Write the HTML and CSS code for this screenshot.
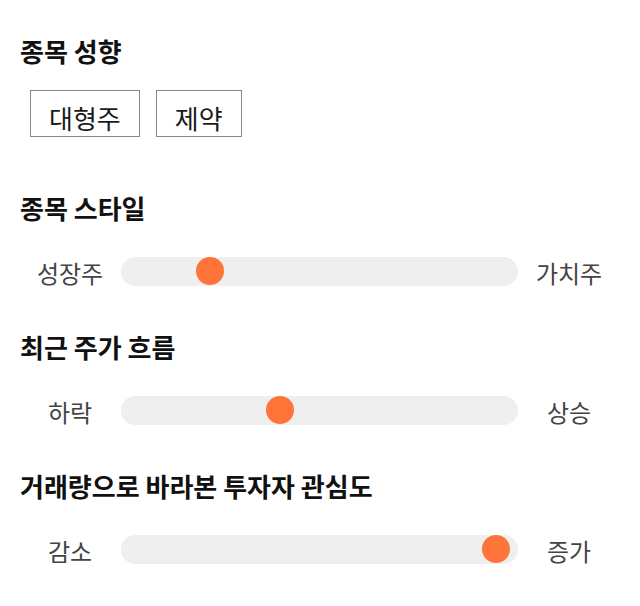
FILE: index.html
```html
<!DOCTYPE html>
<html>
<head>
    <title>종목 분석</title>
    <meta charset="UTF-8">
    <link rel="stylesheet" href="styles.css">
</head>
<body>
    <div class="panel">
        <h2 class="title first">종목 성향</h2>
        <div class="tags">
            <span class="tag">대형주</span>
            <span class="tag">제약</span>
        </div>

        <h2 class="title">종목 스타일</h2>
        <div class="slider-row">
            <span class="side">성장주</span>
            <div class="track"><span class="thumb" style="--pos: 0.203"></span></div>
            <span class="side">가치주</span>
        </div>

        <h2 class="title">최근 주가 흐름</h2>
        <div class="slider-row">
            <span class="side">하락</span>
            <div class="track"><span class="thumb" style="--pos: 0.393"></span></div>
            <span class="side">상승</span>
        </div>

        <h2 class="title">거래량으로 바라본 투자자 관심도</h2>
        <div class="slider-row">
            <span class="side">감소</span>
            <div class="track"><span class="thumb" style="--pos: 0.978"></span></div>
            <span class="side">증가</span>
        </div>
    </div>
</body>
</html>
```
FILE: styles.css
```css
body {
    margin: 0;
    padding: 0 20px;
    font-family: "Noto Sans CJK KR", "Noto Sans", sans-serif;
    background: #fff;
}

.panel {
    width: 600px;
}

.title {
    margin: 41px 0 0 0;
    font-size: 26px;
    line-height: 30px;
    font-weight: bold;
    color: #111;
}

.title.first {
    margin-top: 36px;
}

.tags {
    display: flex;
    gap: 16px;
    margin: 24px 0 0 10px;
}

.tag {
    border: 1px solid #888;
    height: 37px;
    padding: 8px 18px 0;
    font-size: 26px;
    line-height: 37px;
    color: #1a1a1a;
}

.tags + .title {
    margin-top: 56px;
}

.slider-row {
    display: flex;
    align-items: center;
    height: 40px;
    margin-top: 28px;
}

.side {
    width: 100px;
    text-align: center;
    font-size: 24px;
    color: #444;
    padding-top: 3px;
}

.track {
    position: relative;
    width: 397px;
    height: 29px;
    margin: 0 1px;
    border-radius: 15px;
    background: #efefef;
}

.thumb {
    position: absolute;
    top: 0.5px;
    left: calc(var(--pos) * (100% - 28px));
    width: 28px;
    height: 28px;
    border-radius: 50%;
    background: #ff7438;
}
```
